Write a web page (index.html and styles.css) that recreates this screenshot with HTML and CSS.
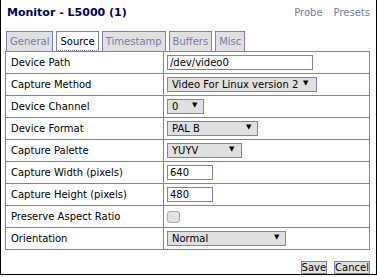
FILE: index.html
```html
<!DOCTYPE html>
<html lang="en">
<head>
    <meta charset="UTF-8">
    <title>Monitor - L5000 (1)</title>
    <link rel="stylesheet" href="styles.css">
</head>
<body>
    <div class="window">
        <div class="header">
            <h1>Monitor - L5000 (1)</h1>
            <div class="links">
                <a href="#">Probe</a>
                <a href="#">Presets</a>
            </div>
        </div>

        <ul class="tabs">
            <li>General</li>
            <li class="active">Source</li>
            <li>Timestamp</li>
            <li>Buffers</li>
            <li>Misc</li>
        </ul>

        <table class="settings">
            <tr>
                <th>Device Path</th>
                <td><input type="text" class="text path" value="/dev/video0"></td>
            </tr>
            <tr>
                <th>Capture Method</th>
                <td><span class="sel method"><select><option>Video For Linux version 2</option></select></span></td>
            </tr>
            <tr>
                <th>Device Channel</th>
                <td><span class="sel channel"><select><option>0</option></select></span></td>
            </tr>
            <tr>
                <th>Device Format</th>
                <td><span class="sel format"><select><option>PAL B</option></select></span></td>
            </tr>
            <tr>
                <th>Capture Palette</th>
                <td><span class="sel palette"><select><option>YUYV</option></select></span></td>
            </tr>
            <tr>
                <th>Capture Width (pixels)</th>
                <td><input type="text" class="text small" value="640"></td>
            </tr>
            <tr>
                <th>Capture Height (pixels)</th>
                <td><input type="text" class="text small" value="480"></td>
            </tr>
            <tr>
                <th>Preserve Aspect Ratio</th>
                <td><span class="check"></span></td>
            </tr>
            <tr>
                <th>Orientation</th>
                <td><span class="sel orient"><select><option>Normal</option></select></span></td>
            </tr>
        </table>

        <div class="buttons">
            <button type="submit">Save</button>
            <button type="button">Cancel</button>
        </div>
    </div>
</body>
</html>
```

FILE: styles.css
```css
*{
    margin: 0;
    padding: 0;
    box-sizing: border-box;
}

:root{
    --line: #8080b8;
    --muted: #7a7aad;
    --navy: #000066;
    --grey: #e0e0e0;
}

body{
    background-color: #fff;
    font-family: "DejaVu Sans", Verdana, sans-serif;
    font-size: 10px;
    color: #000;
}

.window{
    width: 377px;
    height: 275px;
    border: 1px solid #000;
    border-top: none;
    padding: 0 6px 0 4px;
}

.header{
    display: flex;
    justify-content: space-between;
    align-items: flex-start;
    height: 31px;
    padding: 6px 0 0 2px;
}

.header h1{
    font-size: 11px;
    font-weight: bold;
    color: var(--navy);
}

.links{
    display: flex;
    gap: 11px;
    padding-top: 1px;
}

.links a{
    color: var(--muted);
    text-decoration: none;
}

.tabs{
    display: flex;
    gap: 3px;
    list-style: none;
    margin-left: 1px;
}

.tabs li{
    height: 20px;
    padding: 4px 3px 0 3px;
    border: 1px solid var(--line);
    border-bottom: none;
    background-color: var(--grey);
    color: var(--muted);
}

.tabs li.active{
    background-color: #fff;
    color: #000;
    border-bottom: 1px dotted var(--line);
}

.settings{
    width: 365px;
    border-collapse: collapse;
    border: 1px solid var(--line);
}

.settings th,
.settings td{
    height: 22px;
    border: 1px solid var(--line);
    text-align: left;
    font-weight: normal;
    padding: 0 3px;
}

.settings th{
    width: 158px;
    padding-left: 5px;
}

.text{
    display: block;
    height: 15px;
    padding: 0 2px;
    border: 1px solid var(--line);
    font-family: inherit;
    font-size: 10px;
    color: #000;
    outline: none;
}

.path{
    width: 146px;
}

.small{
    width: 46px;
}

.sel{
    position: relative;
    display: block;
}

.sel select{
    display: block;
    appearance: none;
    height: 15px;
    padding: 0 0 0 4px;
    border: 1px solid var(--line);
    background-color: var(--grey);
    font-family: inherit;
    font-size: 10px;
    line-height: 13px;
    color: #000;
    outline: none;
}

.sel::after{
    content: "\25BC";
    position: absolute;
    top: 2px;
    font-size: 7px;
    color: #000;
    pointer-events: none;
}

.method select{ width: 150px; }
.method::after{ left: 136px; }
.channel select{ width: 37px; }
.channel::after{ left: 25px; }
.format select{ width: 91px; }
.format::after{ left: 79px; }
.palette select{ width: 75px; }
.palette::after{ left: 62px; }
.orient select{ width: 119px; }
.orient::after{ left: 107px; }

.check{
    display: block;
    width: 13px;
    height: 12px;
    border: 1px solid #aaa;
    border-radius: 3px;
    background-color: var(--grey);
}

.buttons{
    display: flex;
    justify-content: flex-end;
    gap: 7px;
    margin-top: 11px;
}

.buttons button{
    height: 13px;
    padding: 0;
    border: 1px solid var(--line);
    background-color: var(--grey);
    font-family: inherit;
    font-size: 10px;
    line-height: 11px;
    color: #000;
}
```
